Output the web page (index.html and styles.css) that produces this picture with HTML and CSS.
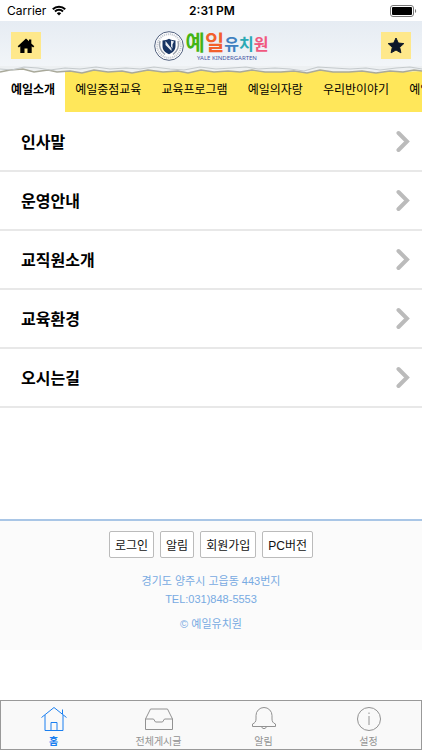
FILE: index.html
```html
<!DOCTYPE html>
<html lang="ko">
<head>
    <meta charset="UTF-8">
    <meta name="viewport" content="width=device-width, initial-scale=1.0">
    <title>예일유치원</title>
    <link rel="stylesheet" href="styles.css">
</head>
<body>
    <div class="status">
        <span class="carrier">Carrier
            <svg width="14" height="11" viewBox="0 0 14 11" fill="none" stroke="#000" stroke-width="2">
                <path d="M.8 4.2a8.8 8.8 0 0 1 12.4 0M3 6.5a5.7 5.7 0 0 1 8 0"/>
                <path d="M7 10.5L4.8 8.3a3.1 3.1 0 0 1 4.4 0z" fill="#000" stroke="none"/>
            </svg>
        </span>
        <span class="time">2:31 PM</span>
        <span class="battery">
            <svg width="27" height="12" viewBox="0 0 27 12">
                <rect x=".5" y=".5" width="23" height="11" rx="2.5" fill="#fff" stroke="#777"/>
                <rect x="2" y="2" width="20" height="8" rx="1" fill="#000"/>
                <path d="M25 4a2.3 2.3 0 0 1 0 4z" fill="#777"/>
            </svg>
        </span>
    </div>

    <header class="header">
        <a href="#" class="square" aria-label="홈">
            <svg width="18" height="16" viewBox="0 0 18 16">
                <path d="M9 .5L.7 8.2l1.2 1.2L3.3 8.3V15h4.2v-4.6h3V15h4.2V8.3l1.4 1.1 1.2-1.2-3-2.8V1.5h-2.3v1.8z"/>
            </svg>
        </a>
        <a href="#" class="logo">
            <svg width="30" height="30" viewBox="0 0 30 30">
                <circle cx="15" cy="15" r="14.3" fill="#fff" stroke="#52617f"/>
                <circle cx="15" cy="15" r="11.8" fill="none" stroke="#c5cad3" stroke-width="2" stroke-dasharray="1.2 .8"/>
                <path d="M8.5 9.500c2.500 0 4.500-.6 6.500-1.700 2 1.100 4 1.700 6.500 1.700v5.500c0 4-2.500 6.500-6.500 8.300-4-1.800-6.500-4.300-6.500-8.300z" fill="#173463"/>
                <path d="M11.500 10l6 7.500v2.500l-6-6zM17 9.500l3 1-1.500 3v4l-1.500-2z" fill="#e9edf3"/>
                <path d="M6 10c-1.500 5 .5 10.500 5 13.500M24 10c1.500 5-.5 10.500-5 13.500" fill="none" stroke="#9aa1ac" stroke-width="1.5"/>
            </svg>
            <span class="logo-text">
                <span class="logo-name"><b class="green">예</b><b class="orange">일</b><span class="small"><b class="blue">유</b><b class="teal">치</b><b class="pink">원</b></span></span>
                <span class="logo-sub">YALE KINDERGARTEN</span>
            </span>
        </a>
        <a href="#" class="square" aria-label="즐겨찾기">
            <svg width="18" height="17" viewBox="0 0 18 17">
                <path d="M9 1l2.300 5 5.500.6-4.100 3.700 1.200 5.500L9 13l-4.900 2.800 1.200-5.500L1.200 6.600 6.700 6z" fill="#0d1729" stroke="#0d1729" stroke-linejoin="round"/>
            </svg>
        </a>
        <!-- torn paper edge -->
        <svg class="torn" viewBox="0 0 422 8" preserveAspectRatio="none">
            <path d="M0 0H422V5L403 6 390 5 376 7 362 5 349 6 333 6 320 4 307 7 294 5 281 6 265 6 252 4 240 6 228 5 214 6 201 4 188 7 178 5 163 6 148 4 132 7 122 5 108 6 94 4 82 7 70 5 57 6 48 4 34 6 23 3 10 4 0 6z" fill="#edf0f2"/>
            <path d="M0 6L10 4 23 3 34 6 48 4 57 6 70 5 82 7 94 4 108 6 122 5 132 7 148 4 163 6 178 5 188 7 201 4 214 6 228 5 240 6 252 4 265 6 281 6 294 5 307 7 320 4 333 6 349 6 362 5 376 7 390 5 403 6 414 4 422 5" fill="none" stroke="#a9a99a" stroke-width="1.3"/>
            <path d="M0 3L12 4 24 1 38 2 50 4 65 2 80 3 96 1 110 3 126 2 140 3 154 1 170 3 184 4 200 1 216 3 232 2 246 1 258 3 275 2 290 3 304 5 318 1 334 2 350 3 366 2 380 4 396 2 410 1 422 3" fill="none" stroke="#c5cacd" stroke-width="1.2"/>
        </svg>
    </header>

    <nav class="tabs">
        <a href="#" class="active">예일소개</a>
        <a href="#">예일중점교육</a>
        <a href="#">교육프로그램</a>
        <a href="#">예일의자랑</a>
        <a href="#">우리반이야기</a>
        <a href="#">예일앨범</a>
    </nav>

    <main class="menu">
        <a href="#">인사말 <svg width="14" height="22" viewBox="0 0 14 22"><path d="M2.5 3L11 11.500l-8.500 8.500"/></svg></a>
        <a href="#">운영안내 <svg width="14" height="22" viewBox="0 0 14 22"><path d="M2.5 3L11 11.500l-8.500 8.500"/></svg></a>
        <a href="#">교직원소개 <svg width="14" height="22" viewBox="0 0 14 22"><path d="M2.5 3L11 11.500l-8.500 8.500"/></svg></a>
        <a href="#">교육환경 <svg width="14" height="22" viewBox="0 0 14 22"><path d="M2.5 3L11 11.500l-8.500 8.500"/></svg></a>
        <a href="#">오시는길 <svg width="14" height="22" viewBox="0 0 14 22"><path d="M2.5 3L11 11.500l-8.500 8.500"/></svg></a>
    </main>

    <footer class="footer">
        <div class="buttons">
            <button type="button">로그인</button>
            <button type="button">알림</button>
            <button type="button">회원가입</button>
            <button type="button">PC버전</button>
        </div>
        <p>경기도 양주시 고읍동 443번지<br>TEL:031)848-5553</p>
        <p>© 예일유치원</p>
    </footer>

    <nav class="bottom">
        <a href="#" class="on">
            <svg width="28" height="26" viewBox="0 0 28 26">
                <path d="M1.5 11.500L14 1.500l12.500 10M5 9v15.500h18V9M22.500 8V3.500M11 24.500v-8h6v8"/>
            </svg>
            <span>홈</span>
        </a>
        <a href="#">
            <svg width="28" height="26" viewBox="0 0 28 26">
                <path d="M.5 13L5.500 3h17l5 10v10.500H.5zM.5 13h8l2 3h7l2-3h8"/>
            </svg>
            <span>전체게시글</span>
        </a>
        <a href="#">
            <svg width="28" height="26" viewBox="0 0 28 26">
                <path d="M2.5 20.500v-2.500c2.500-1 3.500-2.500 3.500-5V9.500a8 8 0 0 1 16 0V13c0 2.500 1 4 3.500 5v2.500zM11.500 20.500a2.600 3 0 0 0 5 0"/>
            </svg>
            <span>알림</span>
        </a>
        <a href="#">
            <svg width="28" height="26" viewBox="0 0 28 26">
                <circle cx="14" cy="13" r="11.5"/>
                <path d="M14 10v9M14 6.500v1.500"/>
            </svg>
            <span>설정</span>
        </a>
    </nav>
</body>
</html>
```
FILE: styles.css
```css
* {
    box-sizing: border-box;
}
body {
    margin: 0;
    min-height: 100vh;
    display: flex;
    flex-direction: column;
    background: #fff;
    color: #000;
    font-family: "Liberation Sans", "Noto Sans CJK KR", sans-serif;
    font-size: 12px;
}
a {
    color: inherit;
    text-decoration: none;
}
svg {
    display: block;
    flex: none;
}
.status {
    display: grid;
    grid-template-columns: 1fr auto 1fr;
    align-items: center;
    height: 21px;
    padding: 0 5px 0 7px;
    font-family: Inter, sans-serif;
    font-size: 12px;
}
.carrier {
    display: flex;
    align-items: center;
    gap: 6px;
}
.time {
    font-weight: 600;
}
.battery {
    justify-self: end;
}
.header {
    position: relative;
    z-index: 1;
    display: flex;
    justify-content: space-between;
    align-items: center;
    height: 49px;
    padding: 0 11px;
    background: linear-gradient(#e6ecf3, #f3f6f9);
}
.square {
    display: flex;
    align-items: center;
    justify-content: center;
    width: 30px;
    height: 27px;
    background: #fee88b;
}
.logo {
    display: flex;
    align-items: center;
    gap: 2px;
}
.logo-text {
    display: flex;
    flex-direction: column;
    align-items: center;
}
.logo-name {
    font-family: "Noto Sans CJK KR", sans-serif;
    font-size: 21px;
    line-height: 22px;
}
.small {
    font-size: 16px;
}
.logo-sub {
    font-family: "Noto Sans", sans-serif;
    font-size: 6px;
    line-height: 8px;
    color: #3f55a5;
}
.green {
    color: #43b414;
}
.orange {
    color: #f2602c;
}
.blue {
    color: #3f7fc0;
}
.teal {
    color: #2ba9b4;
}
.pink {
    color: #f0597f;
}
.torn {
    position: absolute;
    bottom: -4px;
    left: 0;
    width: 100%;
    height: 8px;
}
.tabs {
    display: flex;
    height: 42px;
    background: #ffe75a;
    overflow: hidden;
    white-space: nowrap;
}
.tabs a {
    flex: none;
    padding: 0 10px;
    line-height: 40px;
}
.tabs .active {
    padding-left: 11px;
    background: #fff;
    font-weight: bold;
}
.menu {
    padding-top: 1px;
}
.menu a {
    display: flex;
    align-items: center;
    justify-content: space-between;
    height: 59px;
    padding: 0 12px 2px 21px;
    border-bottom: 2px solid #e8e8e8;
    font-size: 16px;
    font-weight: bold;
}
.menu svg {
    fill: none;
    stroke: #bbb;
    stroke-width: 4;
    stroke-linecap: round;
}
.footer {
    margin-top: 111px;
    min-height: 131px;
    padding-top: 10px;
    border-top: 2px solid #a9c6e6;
    background: #fbfbfb;
    color: #78aae2;
    text-align: center;
    font-size: 11px;
    line-height: 18px;
}
.buttons {
    display: flex;
    justify-content: center;
    gap: 6px;
    margin-bottom: 14px;
}
.buttons button {
    height: 27px;
    padding: 0 5px;
    border: 1px solid #bbb;
    border-radius: 2px;
    background: #fff;
    color: #111;
    font-family: inherit;
    font-size: 12px;
}
.footer p {
    margin: 0 0 7px;
}
.bottom {
    display: flex;
    height: 50px;
    margin-top: auto;
    border: 1px solid #999;
    background: #f9f9f9;
    color: #929292;
}
.bottom a {
    flex: 1;
    display: flex;
    flex-direction: column;
    align-items: center;
    gap: 3px;
    padding-top: 5px;
    font-size: 10px;
    line-height: 14px;
}
.bottom svg {
    fill: none;
    stroke: currentColor;
}
.bottom .on {
    color: #1a7ff0;
    font-weight: bold;
}
```
